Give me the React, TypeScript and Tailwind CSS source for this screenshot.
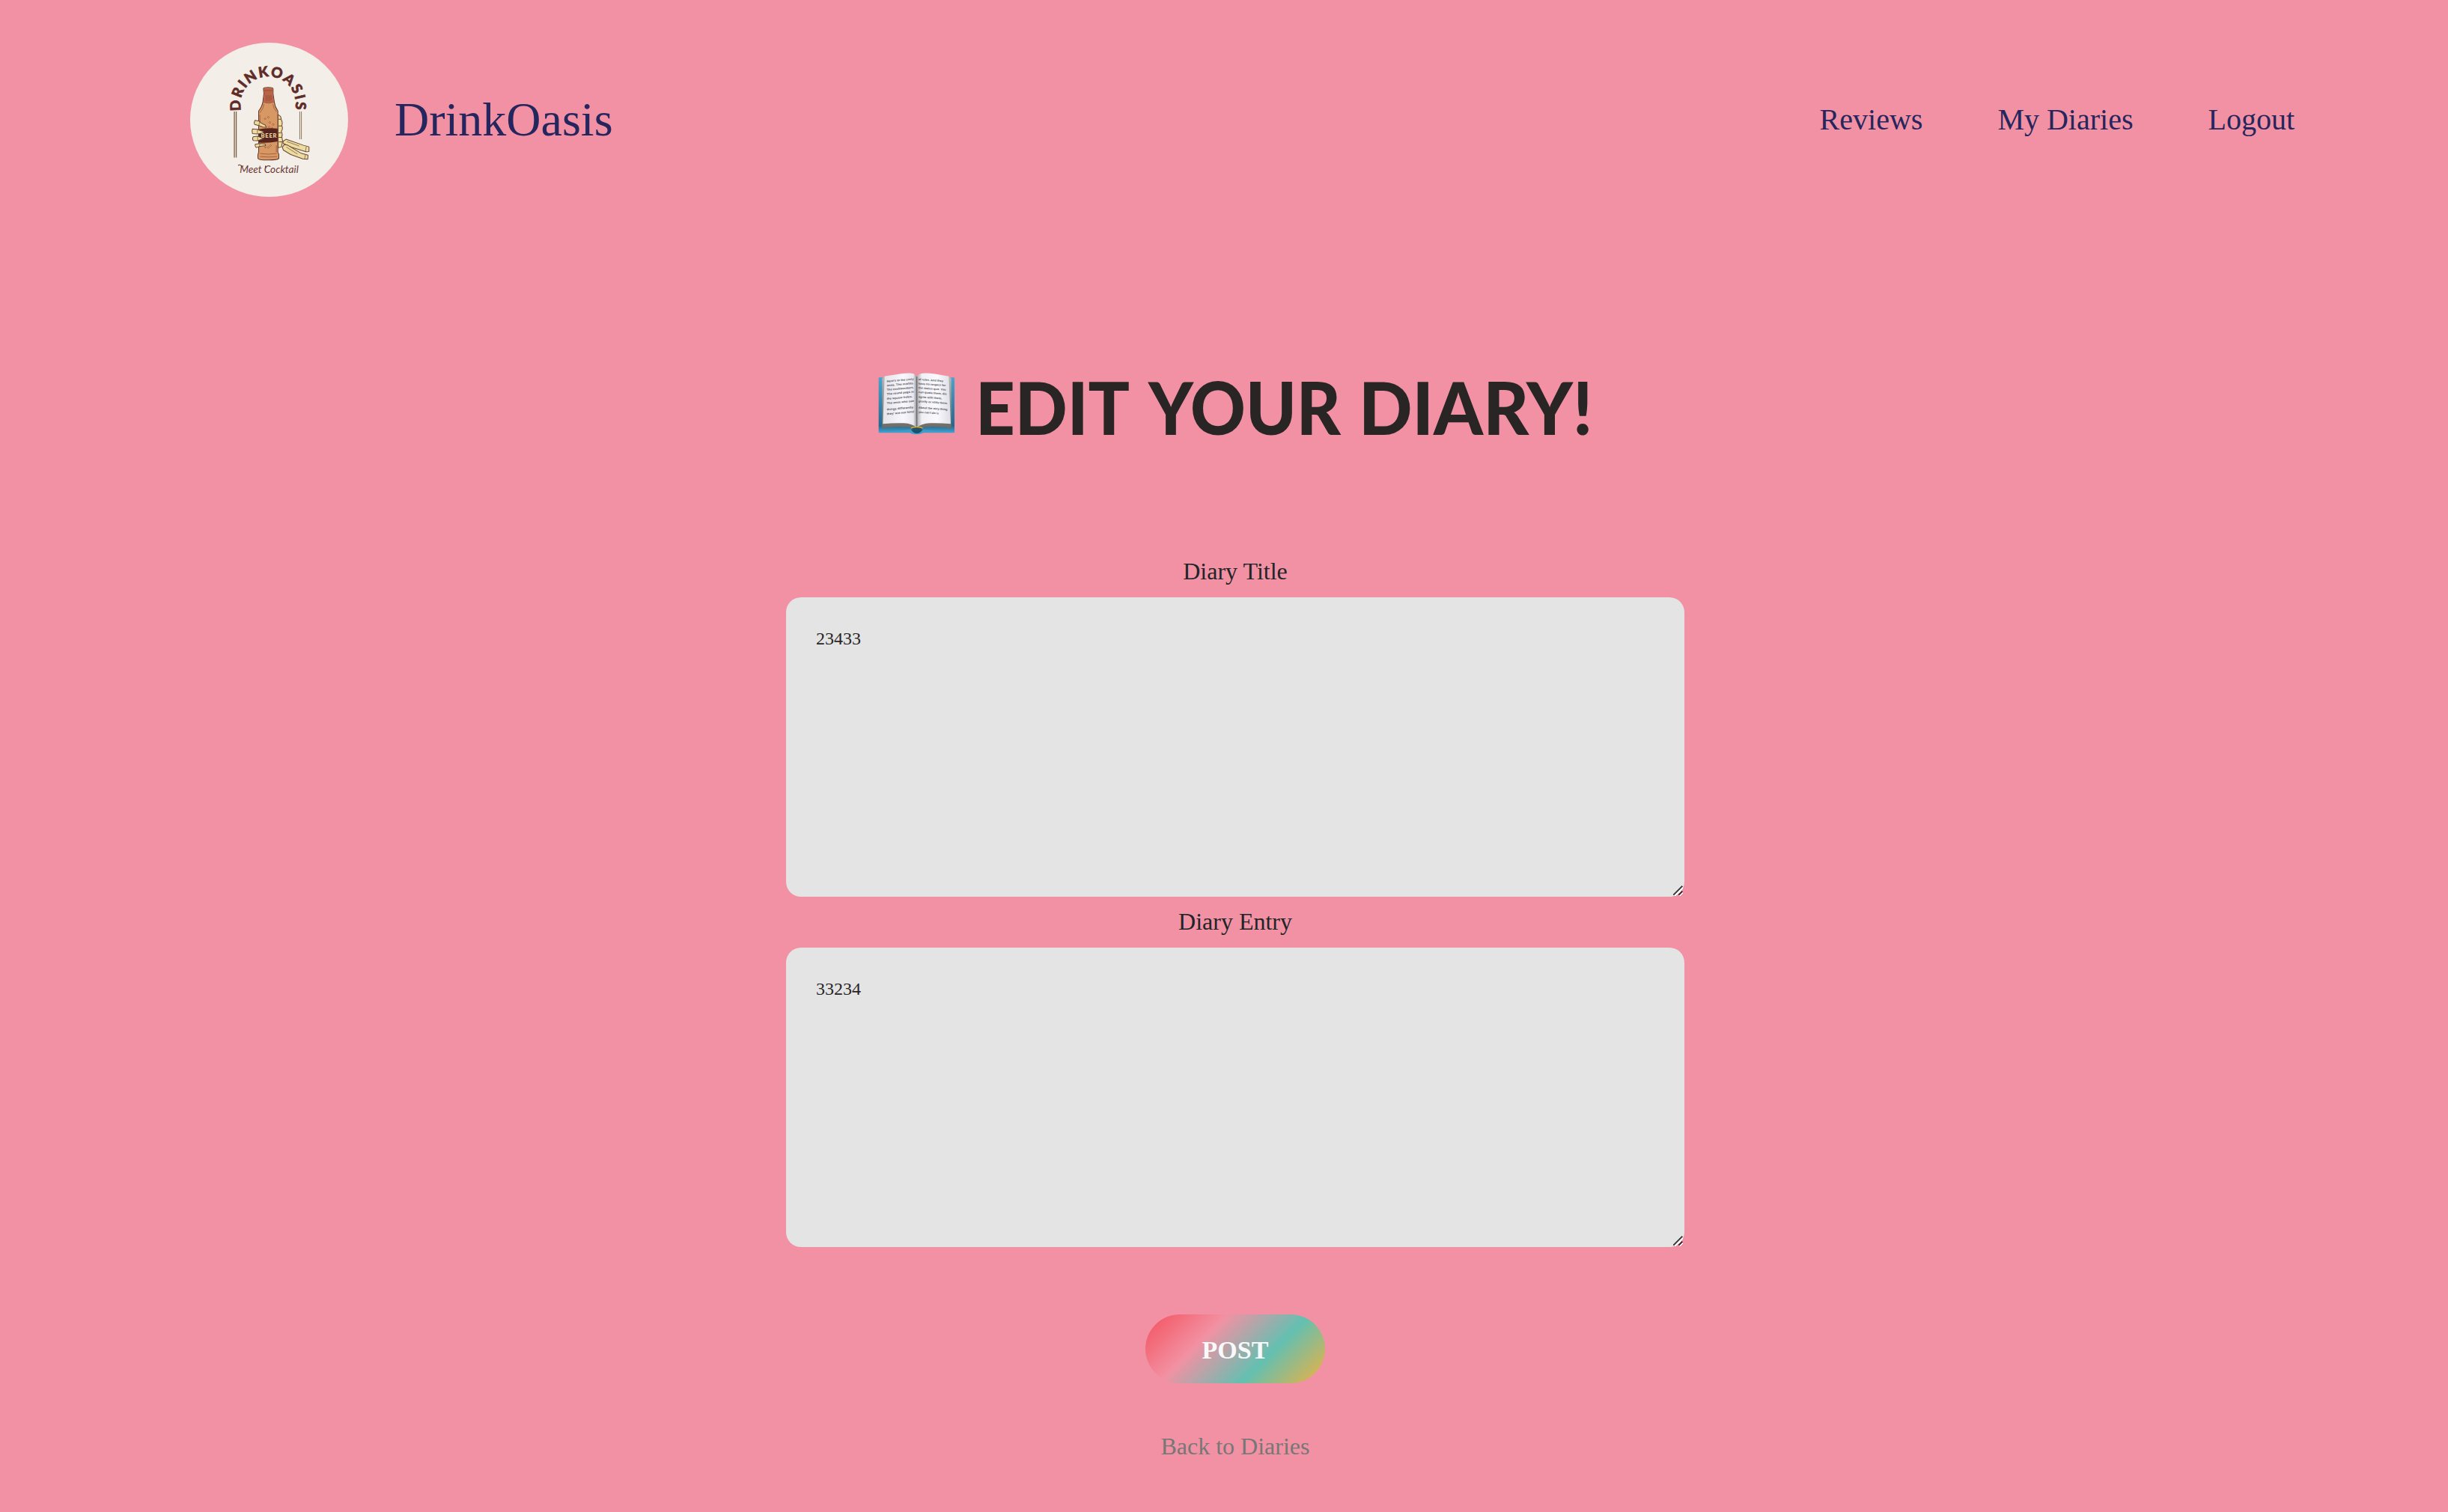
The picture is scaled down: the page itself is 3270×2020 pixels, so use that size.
const leftPage = [
  "Here's to the crazy",
  'ones. The misfits.',
  'The troublemakers.',
  'The round pegs in',
  'the square holes.',
  'The ones who see',
  'things differently.',
  "they' are not fond",
];

const rightPage = [
  'of rules. And they',
  'have no respect for',
  'the status quo. You',
  'can quote them, dis',
  'agree with them,',
  'glorify or vilify them.',
  'About the only thing',
  "you can't do is",
];

const lineY = [90, 107, 124, 141, 160, 178, 203, 221];

function Logo() {
  return (
    <svg viewBox="44 52 634 616" preserveAspectRatio="none" className="h-[206px] w-[211px] shrink-0">
      <ellipse cx="361" cy="360" rx="317" ry="308" fill="#f3efe8" />
      <defs>
        <path id="arc" d="M 249 324 A 111 111 0 1 1 465 324" />
      </defs>
      <text fontFamily="Lato, sans-serif" fontWeight="900" fontSize="57" fill="#5f2b28" stroke="#5f2b28" strokeWidth="2">
        <textPath href="#arc" textLength="395" lengthAdjust="spacing">DRINKOASIS</textPath>
      </text>
      <g stroke="#7b6045" strokeWidth="4">
        <path d="M221.500 327V511M229 327V511" />
        <path d="M484 327V438M490.500 327V438" strokeWidth="2.500" />
      </g>
      {/* fingers behind the bottle and the forearm */}
      <g fill="#ecdca0" stroke="#6b4630" strokeWidth="3" strokeLinejoin="round">
        <path d="M396 340q14 4 14 20q6 10 2 24q6 12-2 22q6 12 2 22l3 16-4 24-14 4z" />
        <path d="M399 358h11M399 385h12M399 412h10M399 430h15M400 448h14" fill="none" />
        <path d="M417 446l12-8 70 24 22 6v19l-12 1-58-18-34-16z" />
        <path d="M414 470l8-11 14 3 54 32 27 7-1 17-20-2-48-17-30-18z" />
        <path d="M510 467l-3 20M507 499l-4 18M432 447l50 18M430 469l45 28" fill="none" strokeWidth="2" />
      </g>
      {/* bottle */}
      <path d="M338 236q0-5 19-5t20 5v20l5 34q2 18 14 35v165l4 8v16q-2 7-43 7t-41-7v-14l3-12V325q15-20 17-38l4-32z" fill="#d89864" stroke="#603329" strokeWidth="3" />
      <path d="M339 236q18-6 37 0v22l4 30q-22 8-43 0l4-30z" fill="#b96348" />
      <path d="M338 243h38M349 262v23M356 262v23M363 262v23M369 263v18M336 290q20 8 46 0M340 297l-4 17-12 18M376 298l5 16 10 14M325 495q30 5 66 0M325 507q34 4 68 0M324 340v40M390 462v28" fill="none" stroke="#8d4634" strokeWidth="2" />
      <g fill="#efc58c" stroke="#7d4630" strokeWidth="2">
        <circle cx="345" cy="356" r="2.500" /><circle cx="358" cy="350" r="3" /><circle cx="364" cy="371" r="3" />
        <circle cx="377" cy="379" r="3" /><circle cx="361" cy="389" r="3" /><circle cx="373" cy="393" r="2.500" />
        <circle cx="367" cy="463" r="3" /><circle cx="358" cy="470" r="3" /><circle cx="346" cy="470" r="2.500" />
      </g>
      <path d="M319 398q36-6 76-3v52q-34 7-76 4z" fill="#56231f" />
      <text x="328" y="431" fontFamily="Lato, sans-serif" fontWeight="900" fontSize="23" fill="#ecdca0" textLength="63">BEER</text>
      {/* fingers in front */}
      <g fill="#ecdca0" stroke="#6b4630" strokeWidth="3" strokeLinejoin="round">
        <path d="M304 362l19 4 5 7 17 8 5 9-14-1-14-5-19-5q-4-8 1-17z" />
        <path d="M294 397l20 1 8 4 16 5v5l-16 3-8 2-20-2q-3-10 0-18z" />
        <path d="M297 428l18-2 8 3 16 6-16 6-9 3-17-1q-5-8 0-15z" />
        <path d="M305 458l20-3 20 2 2 6-22 3-16 5q-6-6-4-13z" />
        <path d="M323 366l-3 17M314 399v17M315 427v16M323 456v12" fill="none" strokeWidth="2" />
      </g>
      {/* hand-lettered tagline */}
      <text x="243" y="573" fontFamily="Lato, sans-serif" fontStyle="italic" fontWeight="400" fontSize="42" fill="#6b3634" textLength="236" lengthAdjust="spacingAndGlyphs">
        Meet Cocktail
      </text>
      <path d="M236 543q6-6 12 0t10 1M347 543q-4 9 4 8" fill="none" stroke="#6b3634" strokeWidth="3" />
    </svg>
  );
}

function OpenBook() {
  return (
    <svg viewBox="68 52 308 248" className="h-[82.667px] w-[102.667px] shrink-0">
      <defs>
        <linearGradient id="cover" x1="0" y1="0" x2="0" y2="1">
          <stop offset="0" stopColor="#4aa3cf" />
          <stop offset="0.85" stopColor="#23698f" />
          <stop offset="1" stopColor="#4fb0e0" />
        </linearGradient>
        <linearGradient id="pageL" x1="0" x2="1">
          <stop offset="0" stopColor="#e4e3ea" />
          <stop offset="0.6" stopColor="#f8f7fc" />
          <stop offset="0.9" stopColor="#e9e8ee" />
          <stop offset="1" stopColor="#8e8d92" />
        </linearGradient>
        <linearGradient id="pageR" x1="0" x2="1">
          <stop offset="0" stopColor="#a9a8ad" />
          <stop offset="0.15" stopColor="#f1f0f5" />
          <stop offset="0.6" stopColor="#faf9fd" />
          <stop offset="1" stopColor="#dedde4" />
        </linearGradient>
        <linearGradient id="edge" x1="0" y1="0" x2="0" y2="1">
          <stop offset="0" stopColor="#b9b8b8" />
          <stop offset="1" stopColor="#6b6966" />
        </linearGradient>
      </defs>
      <path d="M70 74q0-3 3-3h298q3 0 3 3v216q0 3-3 3H250q-10 6-28 6t-26-6H73q-3 0-3-3z" fill="url(#cover)" />
      <path d="M71 286q70 2 127-5h49q60 7 126 5v5H250q-12 7-27 7t-27-7H71z" fill="#3f9ccb" />
      <path d="M200 281q10 14 23 14t24-14z" fill="#1c4f6c" />
      <path d="M84 74l10-8h257l10 8v199q-70-8-114-2l-24 7-24-7q-50-6-115 2z" fill="url(#edge)" />
      <path d="M94 66q90-16 108-12 17 2 21 14v204q-20-16-52-18-40-2-84 3z" fill="url(#pageL)" />
      <path d="M351 66q-80-16-104-12-20 2-24 14v204q20-16 52-18 36-2 84 3z" fill="url(#pageR)" />
      <path d="M223 68v204" stroke="#6a696e" strokeWidth="4" />
      <path d="M198 275q0-5 25-5t25 5q-8 10-25 10t-25-10z" fill="#22536b" />
      <path d="M199 275q8-6 24-6t24 6" fill="none" stroke="#e2b92c" strokeWidth="4" />
      <g fontFamily="Liberation Sans, sans-serif" fontWeight="700" fontSize="11.500" fill="#55545a">
        {leftPage.map((line, i) => (
          <text key={line} x="103" y={lineY[i]} transform={`rotate(-5 103 ${lineY[i]})`} textLength={i === 4 ? 103 : 109} lengthAdjust="spacingAndGlyphs">
            {line}
          </text>
        ))}
        {rightPage.map((line, i) => (
          <text key={line} x="229" y={lineY[i] - 8} transform={`rotate(4 229 ${lineY[i] - 8})`} textLength={[100, 110, 111, 114, 95, 118, 117, 82][i]} lengthAdjust="spacingAndGlyphs">
            {line}
          </text>
        ))}
      </g>
    </svg>
  );
}

function ResizeGrip() {
  return (
    <svg viewBox="0 0 14 14" className="absolute right-[2px] bottom-[1px] size-[14px]" shapeRendering="crispEdges">
      <path d="M3 14L14 3M9 14l5-5" stroke="#ffffff" strokeWidth="2" />
      <path d="M1 13L13 1" stroke="#4b4b4d" strokeWidth="2" />
      <path d="M8 13l5-5" stroke="#5b2b35" strokeWidth="2" />
    </svg>
  );
}

function Field({ label, value }: { label: string; value: string }) {
  return (
    <div className="flex w-[1200px] flex-col">
      <label className="flex h-[68px] items-center justify-center pb-0.5 text-[32px] leading-none text-[#212529]">{label}</label>
      <div className="relative h-[400px]">
        <textarea
          defaultValue={value}
          className="block h-full w-full resize-none rounded-[20px] bg-[#e4e4e4] px-10 py-[37px] text-2xl leading-9 text-[#282524] outline-none"
        />
        <ResizeGrip />
      </div>
    </div>
  );
}

export default function App() {
  return (
    <div className="flex h-[2020px] w-[3270px] flex-col overflow-hidden bg-[#f291a3] font-['Liberation_Serif',serif]">
      <header className="flex h-[320px] items-center justify-between pr-[205px] pl-[254px] text-[#25265e]">
        <div className="flex items-center gap-[62px]">
          <Logo />
          <span className="text-[64px] leading-none">DrinkOasis</span>
        </div>
        <nav className="flex gap-[100px] text-[40px] leading-none">
          <a>Reviews</a>
          <a>My Diaries</a>
          <a>Logout</a>
        </nav>
      </header>
      <main className="flex w-[3300px] flex-col items-center">
        <h1 className="mt-[178px] flex h-[86px] w-[954px] items-start font-['Lato',sans-serif] text-[97.500px] leading-[91px] font-black whitespace-pre text-[#282524]">
          <OpenBook />
          <span className="ml-[27px] w-[231px] origin-left scale-x-[0.943]">EDIT </span>
          <span className="w-[281px] origin-left scale-x-[0.935]">YOUR </span>
          <span className="origin-left scale-x-[0.965]">DIARY!</span>
        </h1>
        <form className="mt-[146px] flex flex-col items-center">
          <Field label="Diary Title" value="23433" />
          <Field label="Diary Entry" value="33234" />
          <button
            type="button"
            className="mt-[90px] h-[92px] w-[240px] rounded-[46px] bg-[linear-gradient(135deg,#f4505c_0%,#f291a3_33%,#63c0b1_66%,#f2b03c_100%)] pt-1 text-[34px] leading-none font-bold text-[#f8f9fa]"
          >
            POST
          </button>
          <a className="mt-[68px] text-[32px] leading-none text-[#777777]">Back to Diaries</a>
        </form>
      </main>
    </div>
  );
}
